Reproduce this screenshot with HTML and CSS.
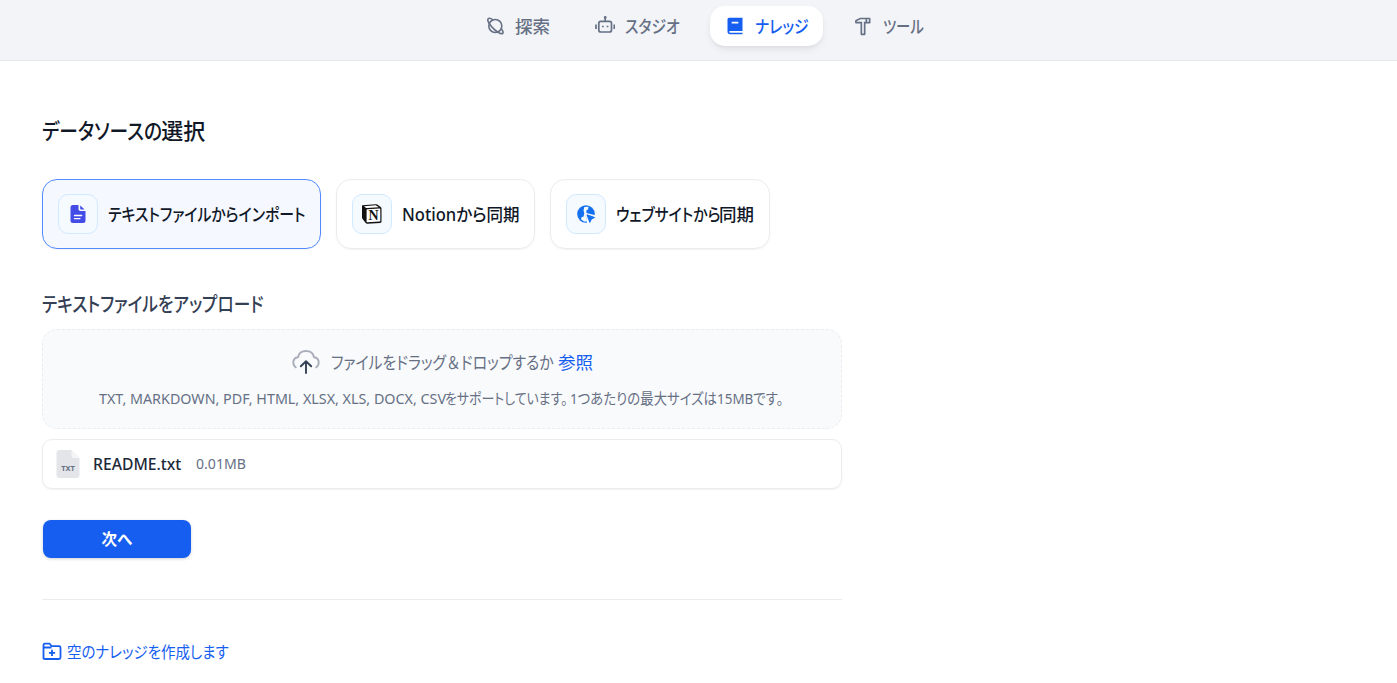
FILE: index.html
```html
<!DOCTYPE html>
<html lang="ja">
<head>
    <meta charset="UTF-8">
    <meta name="viewport" content="width=device-width, initial-scale=1.0">
    <title>データソースの選択</title>
    <link rel="stylesheet" href="styles.css">
</head>
<body>
    <header class="header">
        <nav class="nav">
            <a class="nav-item nav-explore" href="#">
                <svg class="nav-icon" viewBox="0 0 20 20" fill="none" stroke="currentColor" stroke-width="1.6">
                    <circle cx="9.300" cy="10" r="6.500"/>
                    <path d="M3.300 7.600C1.800 5.500 1.500 3.500 2.300 2.700C3.300 1.800 5.200 2.500 7 3.800"/>
                    <path d="M3.100 7.200C4.200 9.200 6 11.300 8 13.200C11.600 16.500 15.600 18.400 16.800 17.300C17.500 16.600 16.900 15 15.500 12.900"/>
                </svg>
                <span class="nav-text">探索</span>
            </a>
            <a class="nav-item nav-studio" href="#">
                <svg class="nav-icon" viewBox="0 0 20 20" fill="none" stroke="currentColor" stroke-width="1.7">
                    <rect x="3.800" y="5.300" width="12.700" height="10.700" rx="2"/>
                    <path d="M10.200 5V1.500M1 8.500V13M19.300 8.500V13"/>
                    <circle cx="10.200" cy="1.500" r=".6"/>
                    <path d="M7 10.500h1.700M11.700 10.500h1.700"/>
                </svg>
                <span class="nav-text kana">スタジオ</span>
            </a>
            <a class="nav-item nav-knowledge active" href="#">
                <svg class="nav-icon" viewBox="0 0 24 24" fill="currentColor">
                    <path d="M21 18H6C5.448 18 5 18.448 5 19C5 19.552 5.448 20 6 20H21V22H6C4.343 22 3 20.657 3 19V4C3 2.895 3.895 2 5 2H21V18ZM16 9V7H8V9H16Z"/>
                </svg>
                <span class="nav-text kana">ナレッジ</span>
            </a>
            <a class="nav-item nav-tools" href="#">
                <svg class="nav-icon" viewBox="0 0 24 24" fill="currentColor">
                    <path d="M20 2C20.552 2 21 2.448 21 3V8C21 8.552 20.552 9 20 9H15V22C15 22.552 14.552 23 14 23H10C9.448 23 9 22.552 9 22V9H3.500C2.948 9 2.500 8.552 2.500 8V5.618C2.500 5.239 2.714 4.893 3.053 4.724L8.500 2H20ZM15 4H8.972L4.500 6.236V7H11V21H13V7H15V4ZM19 4H17V7H19V4Z"/>
                </svg>
                <span class="nav-text kana">ツール</span>
            </a>
        </nav>
    </header>

    <main class="container">
        <h1 class="title"><span class="kana">データソースの</span>選択</h1>

        <div class="source-list">
            <div class="source-card source-file active">
                <div class="source-icon">
                    <svg width="20" height="20" viewBox="0 0 20 20">
                        <path fill="#444CE7" d="M5 1H10.500V5.200A1.800 1.800 0 0 0 12.300 7H17.500V16.500A2.500 2.500 0 0 1 15 19H5A2.500 2.500 0 0 1 2.500 16.500V3.500A2.500 2.500 0 0 1 5 1Z"/>
                        <path fill="#444CE7" d="M12.200 1.400L16.600 5.600H13.200A1 1 0 0 1 12.200 4.600Z"/>
                        <path d="M6.500 11.500H13.700M6.500 14.700H11.900" stroke="#fff" stroke-width="1.300" stroke-linecap="round"/>
                    </svg>
                </div>
                <span class="source-name kana">テキストファイルからインポート</span>
            </div>
            <div class="source-card source-notion">
                <div class="source-icon">
                    <svg width="22" height="22" viewBox="0 0 22 22">
                        <path fill="#111" d="M1.500 2.300L14.700 1.200Q15.600 1.100 16.300 1.600L19.700 4Q20.500 4.600 20.500 5.500V18.500Q20.500 19.800 19.200 19.900L6.300 20.700Q5.300 20.800 4.700 20L1.600 16.100Q1 15.300 1 14.300V3.300Q1 2.400 1.500 2.300Z"/>
                        <path fill="#fff" d="M3 3.200L14.700 2.300L17.800 4.300L6 5.100Q5.300 5.100 4.800 4.700ZM5.600 6.900Q5.600 6.300 6.200 6.300L18.700 5.500Q19.300 5.500 19.300 6.100V17.900Q19.300 18.500 18.700 18.600L6.300 19.300Q5.600 19.300 5.600 18.700Z"/>
                        <text class="notion-letter" x="12.500" y="17.200" text-anchor="middle">N</text>
                    </svg>
                </div>
                <span class="source-name">Notionから同期</span>
            </div>
            <div class="source-card source-web">
                <div class="source-icon">
                    <svg width="20" height="20" viewBox="0 0 20 20">
                        <circle cx="10" cy="10" r="8.800" fill="#1570EF"/>
                        <path fill="#F5FAFF" d="M8.300 3L12.500 2.800L12.200 5.300L10.300 6.500L10.500 9L9.700 12L10.700 15.800L11 17.500H8L5 15.300L5.500 13.300L7.600 12.500L8.300 9L7.500 6.500Z"/>
                        <path fill="#F5FAFF" d="M9.300 8.800L19.500 11.200V20H11.200Z"/>
                        <path fill="#1570EF" d="M11 10.800L18.600 13.500L15.400 15.100L13.800 18.400Z" stroke="#1570EF" stroke-linejoin="round" stroke-width="1"/>
                    </svg>
                </div>
                <span class="source-name"><span class="kana">ウェブサイトから</span>同期</span>
            </div>
        </div>

        <h2 class="subtitle"><span class="kana">テキストファイルをアップロード</span></h2>

        <div class="dropzone">
            <div class="drop-row">
                <svg class="cloud" width="30" height="30" viewBox="0 0 30 30" fill="none" stroke-width="1.900" stroke-linecap="round" stroke-linejoin="round">
                    <path stroke="#A9AFBA" d="M4.800 20.300C2.800 19.200 2.300 17.500 2.300 15.600C2.300 12.700 4.200 10.500 7 10.200C7.800 6.300 11 4 15 4S22.200 6.300 23 10.200C25.800 10.500 27.700 12.700 27.700 15.600C27.700 17.500 27.200 19.200 25.200 20.300"/>
                    <path stroke="#344054" d="M15 26V14.800M9.800 19.300L15 14.300L20.200 19.300"/>
                </svg>
                <span class="drop-text kana">ファイルをドラッグ<span class="amp">＆</span>ドロップするか</span>
                <a class="browse" href="#">参照</a>
            </div>
            <p class="drop-tip">
                <span class="tip-types">TXT, MARKDOWN, PDF, HTML, XLSX, XLS, DOCX, CSV</span>
                <span class="tip-support">をサポートしています。</span>
                <span class="tip-size">1つあたりの最大サイズは15MBです。</span>
            </p>
        </div>

        <div class="file-row">
            <svg class="file-icon" width="24" height="30" viewBox="0 0 24 30">
                <path fill="#E3E5E9" d="M3.500 1H15.500L23.500 9V26A3 3 0 0 1 20.500 29H3.500A3 3 0 0 1 .5 26V4A3 3 0 0 1 3.500 1Z"/>
                <path fill="#F4F5F7" d="M15.500 1L23.500 9H17.500A2 2 0 0 1 15.500 7Z"/>
                <text class="file-type" x="12" y="22" text-anchor="middle">TXT</text>
            </svg>
            <span class="file-name">README.txt</span>
            <span class="file-size">0.01MB</span>
        </div>

        <button class="next-btn" type="button">次へ</button>

        <hr class="divider">

        <a class="create-empty" href="#">
            <svg width="20" height="20" viewBox="0 0 20 20" fill="none" stroke="currentColor" stroke-width="1.800" stroke-linejoin="round">
                <path d="M1.500 16.500V3Q1.500 1.700 3 1.700H7.700L9.700 4.200H17Q18.500 4.200 18.500 5.700V15.500Q18.500 17 17 17H3Q1.500 17 1.500 15.500ZM1.500 5.500H9.500"/>
                <path d="M10 7.700V13.900M6.900 10.800H13.100"/>
            </svg>
            <span class="create-text">空のナレッジを作成します</span>
        </a>
    </main>
</body>
</html>
```
FILE: styles.css
```css
* {
    box-sizing: border-box;
}

body {
    margin: 0;
    background: #fff;
    color: #101828;
    font-family: "Noto Sans", "Noto Sans CJK JP", sans-serif;
    font-size: 17.5px;
    font-feature-settings: "palt";
    white-space: nowrap;
}

a {
    text-decoration: none;
}

/* condensed kana */
.kana {
    display: inline-block;
    transform: scaleX(0.85);
    transform-origin: left center;
}

.header {
    height: 61px;
    padding: 6px 0 0 471px;
    background: #f2f4f7;
    border-bottom: 1px solid #e6e8ec;
}

.nav {
    display: flex;
    gap: 14.5px;
}

.nav-item {
    display: flex;
    align-items: center;
    gap: 10px;
    height: 40px;
    padding: 0 15px;
    border-radius: 15px;
    color: #667085;
    font-weight: 500;
}

.nav-item.active {
    background: #fff;
    color: #155eef;
    box-shadow: 0 4px 8px -2px rgba(16, 24, 40, 0.1), 0 2px 4px -2px rgba(16, 24, 40, 0.06);
}

.nav-text {
    padding-bottom: 2px;
}

.nav-icon {
    flex: none;
    width: 20px;
    height: 20px;
}

.nav-explore {
    width: 94px;
    gap: 9px;
}

.nav-studio {
    width: 116px;
}

.nav-knowledge {
    width: 113px;
}

.nav-tools {
    width: 101px;
}

.nav-tools .kana {
    transform: scaleX(0.82);
}

.container {
    width: 842px;
    padding-left: 42px;
}

.title {
    margin: 54px 0 0;
    height: 31px;
    font-size: 22px;
    font-weight: 500;
    line-height: 30px;
}

.title .kana {
    margin-right: -22px;
}

.source-list {
    display: flex;
    gap: 15px;
    margin-top: 33px;
}

.source-card {
    display: flex;
    align-items: center;
    gap: 10px;
    height: 70px;
    padding: 0 15px;
    border: 1px solid #eaecf0;
    border-radius: 15px;
    box-shadow: 0 1px 2px rgba(16, 24, 40, 0.05);
    font-weight: 500;
}

.source-card.active {
    background: #f5f8ff;
    border-color: #528bff;
}

.source-name {
    padding-bottom: 2px;
}

.source-file {
    width: 279px;
}

.source-notion {
    width: 199px;
}

.source-notion .source-name {
    transform: scaleX(0.945);
    transform-origin: left center;
}

.source-web {
    width: 220px;
}

.source-web .kana {
    margin-right: -20px;
}

.source-icon {
    display: flex;
    flex: none;
    align-items: center;
    justify-content: center;
    width: 40px;
    height: 40px;
    background: #f5faff;
    border: 1px solid #d1e9ff;
    border-radius: 10px;
}

.notion-letter {
    font: bold 14px "Liberation Serif", serif;
    fill: #111;
}

.subtitle {
    margin: 41px 0 0;
    height: 30px;
    color: #344054;
    font-size: 20px;
    font-weight: 500;
    line-height: 30px;
}

.subtitle .kana {
    transform: scaleX(0.835);
}

.dropzone {
    height: 100px;
    margin-top: 9px;
    padding-top: 17px;
    background: #f9fafb;
    border: 1px dashed #eaecf0;
    border-radius: 15px;
    color: #667085;
}

.drop-row {
    display: flex;
    align-items: center;
    height: 30px;
    padding-left: 248px;
}

.drop-text {
    width: 227px;
    margin-left: 10px;
    padding-bottom: 1px;
}

.amp {
    margin: 0 1.5px;
}

.browse {
    padding-bottom: 1px;
    color: #155eef;
}

.drop-tip {
    display: flex;
    margin: 10px 0 0 56px;
    font-size: 15px;
    line-height: 22px;
}

.drop-tip span {
    flex: none;
    transform-origin: left center;
}

.tip-types {
    width: 346px;
    transform: scaleX(0.954);
}

.tip-support {
    width: 125px;
    transform: scaleX(0.86);
}

.tip-size {
    transform: scaleX(0.895);
}

.file-row {
    display: flex;
    align-items: center;
    height: 50px;
    margin-top: 10px;
    padding-left: 13px;
    border: 1px solid #eaecf0;
    border-radius: 10px;
    box-shadow: 0 1px 2px rgba(16, 24, 40, 0.06);
}

.file-type {
    font: bold 7.5px "Noto Sans", sans-serif;
    fill: #667085;
}

.file-name {
    margin-left: 13px;
    font-size: 15.7px;
    font-weight: 500;
    color: #1d2939;
}

.file-size {
    margin-left: 15px;
    padding-bottom: 2px;
    color: #667085;
    font-size: 15px;
    transform: scaleX(0.94);
    transform-origin: left center;
}

.next-btn {
    display: block;
    width: 148px;
    height: 38px;
    margin: 31px 0 0 1px;
    padding: 0 0 2px;
    background: #155eef;
    border: none;
    border-radius: 8px;
    box-shadow: 0 1px 3px rgba(16, 24, 40, 0.2);
    color: #fff;
    font: 600 15.5px "Noto Sans CJK JP", sans-serif;
}

.divider {
    height: 1px;
    margin: 41px 0 0;
    background: #eaecf0;
    border: none;
}

.create-empty {
    display: flex;
    align-items: center;
    gap: 5px;
    height: 24px;
    margin-top: 40px;
    color: #155eef;
    font-size: 16px;
}

.create-text {
    padding-bottom: 2px;
    transform: scaleX(0.905);
    transform-origin: left center;
}
```
